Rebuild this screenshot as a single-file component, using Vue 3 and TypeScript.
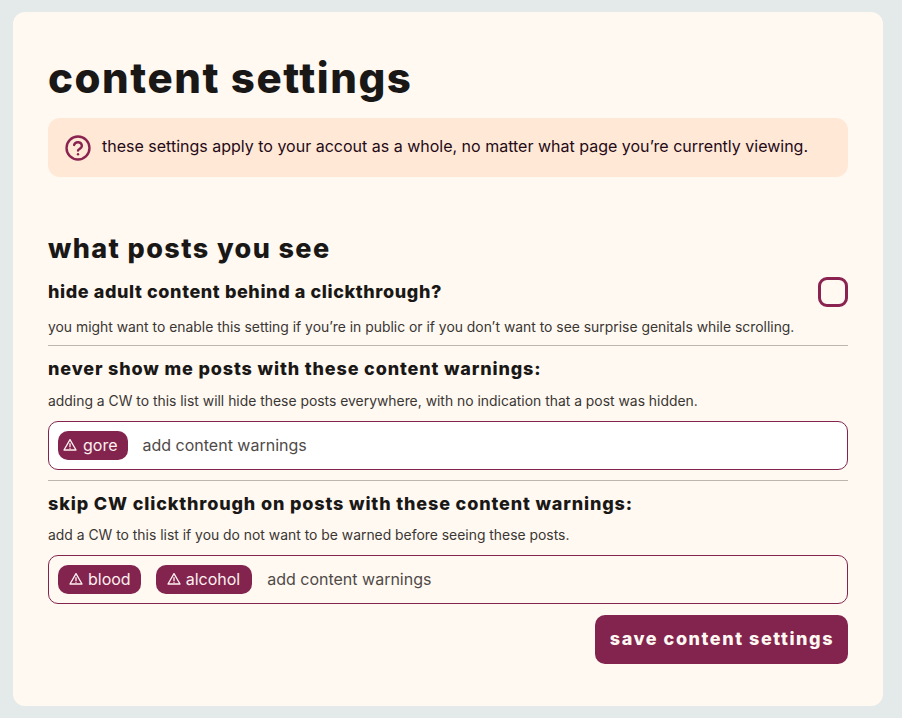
<script setup lang="ts">
interface Tag {
  label: string;
  kind: string;
}
interface Field {
  title: string;
  hint: string;
  tags: Tag[];
  bg: string;
}
const fields: Field[] = [
  {
    title: "never show me posts with these content warnings:",
    hint: "adding a CW to this list will hide these posts everywhere, with no indication that a post was hidden.",
    tags: [{ label: "gore", kind: "short" }],
    bg: "white",
  },
  {
    title: "skip CW clickthrough on posts with these content warnings:",
    hint: "add a CW to this list if you do not want to be warned before seeing these posts.",
    tags: [
      { label: "blood", kind: "" },
      { label: "alcohol", kind: "long" },
    ],
    bg: "cream",
  },
];
</script>

<template>
  <main class="card">
    <h1>content settings</h1>
    <div class="notice">
      <svg class="q" viewBox="0 0 24 24" fill="none" stroke="#8a2350" stroke-width="2.2" stroke-linecap="round" stroke-linejoin="round">
        <circle cx="12" cy="12" r="10.6" />
        <path d="M8.4 9.2a3.7 3.7 0 0 1 7.2 1c0 2.3-3.6 2.8-3.6 4.2" />
        <path d="M12 17.8h.01" />
      </svg>
      <span class="notice-text">these settings apply to your accout as a whole, no matter what page you’re currently viewing.</span>
    </div>
    <h2>what posts you see</h2>
    <section class="row first">
      <div class="row-head">
        <h3>hide adult content behind a clickthrough?</h3>
        <span class="check"></span>
      </div>
      <p>you might want to enable this setting if you’re in public or if you don’t want to see surprise genitals while scrolling.</p>
    </section>
    <section v-for="f in fields" :key="f.title" class="row field">
      <h3>{{ f.title }}</h3>
      <p>{{ f.hint }}</p>
      <div class="input" :class="f.bg">
        <span v-for="t in f.tags" :key="t.label" class="tag" :class="t.kind">
          <svg viewBox="0 0 24 24" fill="none" stroke="currentColor" stroke-width="2" stroke-linecap="round" stroke-linejoin="round">
            <path d="M12 4 3 19.5h18z" />
            <path d="M12 10v4.5M12 17h.01" />
          </svg>
          {{ t.label }}
        </span>
        <span class="placeholder">add content warnings</span>
      </div>
    </section>
    <div class="actions"><button type="button">save content settings</button></div>
  </main>
</template>

<style>
html, body { margin: 0; background: #e4e9ea; }
</style>

<style scoped>
.card {
  box-sizing: border-box;
  width: 870px;
  height: 694px;
  margin: 12px 0 0 13px;
  padding: 0 35px;
  background: #fff9f2;
  border-radius: 12px;
  font-family: Inter, sans-serif;
  color: #1a1816;
  overflow: hidden;
}
h1 {
  margin: 0;
  padding-top: 38px;
  font-size: 42px;
  line-height: 56px;
  font-weight: 800;
  letter-spacing: 1.55px;
}
.notice {
  display: flex;
  align-items: center;
  gap: 11px;
  height: 59px;
  margin-top: 12px;
  padding: 0 17px;
  background: #ffe8d6;
  border-radius: 12px;
  font-size: 16px;
  color: #240a16;
}
.notice-text { margin-bottom: 3px; }
.q { width: 26px; height: 26px; flex: none; }
h2 {
  margin: 55px 0 0;
  font-size: 27px;
  line-height: 34px;
  font-weight: 800;
  letter-spacing: 1.4px;
}
h3 {
  margin: 0;
  font-size: 18px;
  line-height: 26px;
  font-weight: 800;
  letter-spacing: 0.85px;
}
.first h3 { letter-spacing: 0.6px; }
p {
  margin: 0;
  font-size: 13.9px;
  line-height: 18px;
  color: #3a3633;
}
.row { border-bottom: 1px solid #bdb6b0; }
.row:last-of-type { border-bottom: 0; }
.row-head { display: flex; justify-content: space-between; align-items: center; }
.first { padding: 11px 0 9px; }
.first p { margin-top: 11px; }
.field { padding: 10px 0 10px; }
.field p { margin-top: 10px; }
.field:last-of-type { padding-bottom: 11px; }
.field:last-of-type p { margin-top: 9px; }
.check {
  box-sizing: border-box;
  width: 30px;
  height: 30px;
  border: 3px solid #8a2350;
  border-radius: 9px;
}
.input {
  box-sizing: border-box;
  display: flex;
  align-items: center;
  gap: 15px;
  height: 49px;
  margin-top: 11px;
  padding: 0 9px;
  border: 1px solid #82244e;
  border-radius: 10px;
  font-size: 16px;
}
.input.white { background: #fff; }
.tag {
  box-sizing: border-box;
  display: inline-flex;
  align-items: center;
  gap: 4px;
  height: 29px;
  padding: 0 10px 2px;
  background: #82244e;
  color: #fff0f0;
  border-radius: 10px;
}
.tag.short { padding-left: 4px; gap: 5px; }
.tag.long { padding-right: 12px; }
.tag svg { width: 16px; height: 16px; }
.placeholder { color: #4f4a48; margin-bottom: 2px; }
.actions { display: flex; justify-content: flex-end; }
button {
  height: 49px;
  padding: 0 14px 2px 15px;
  border: 0;
  border-radius: 10px;
  background: #82244e;
  color: #fff8f2;
  font: 800 18px Inter, sans-serif;
  letter-spacing: 1.55px;
}
</style>
